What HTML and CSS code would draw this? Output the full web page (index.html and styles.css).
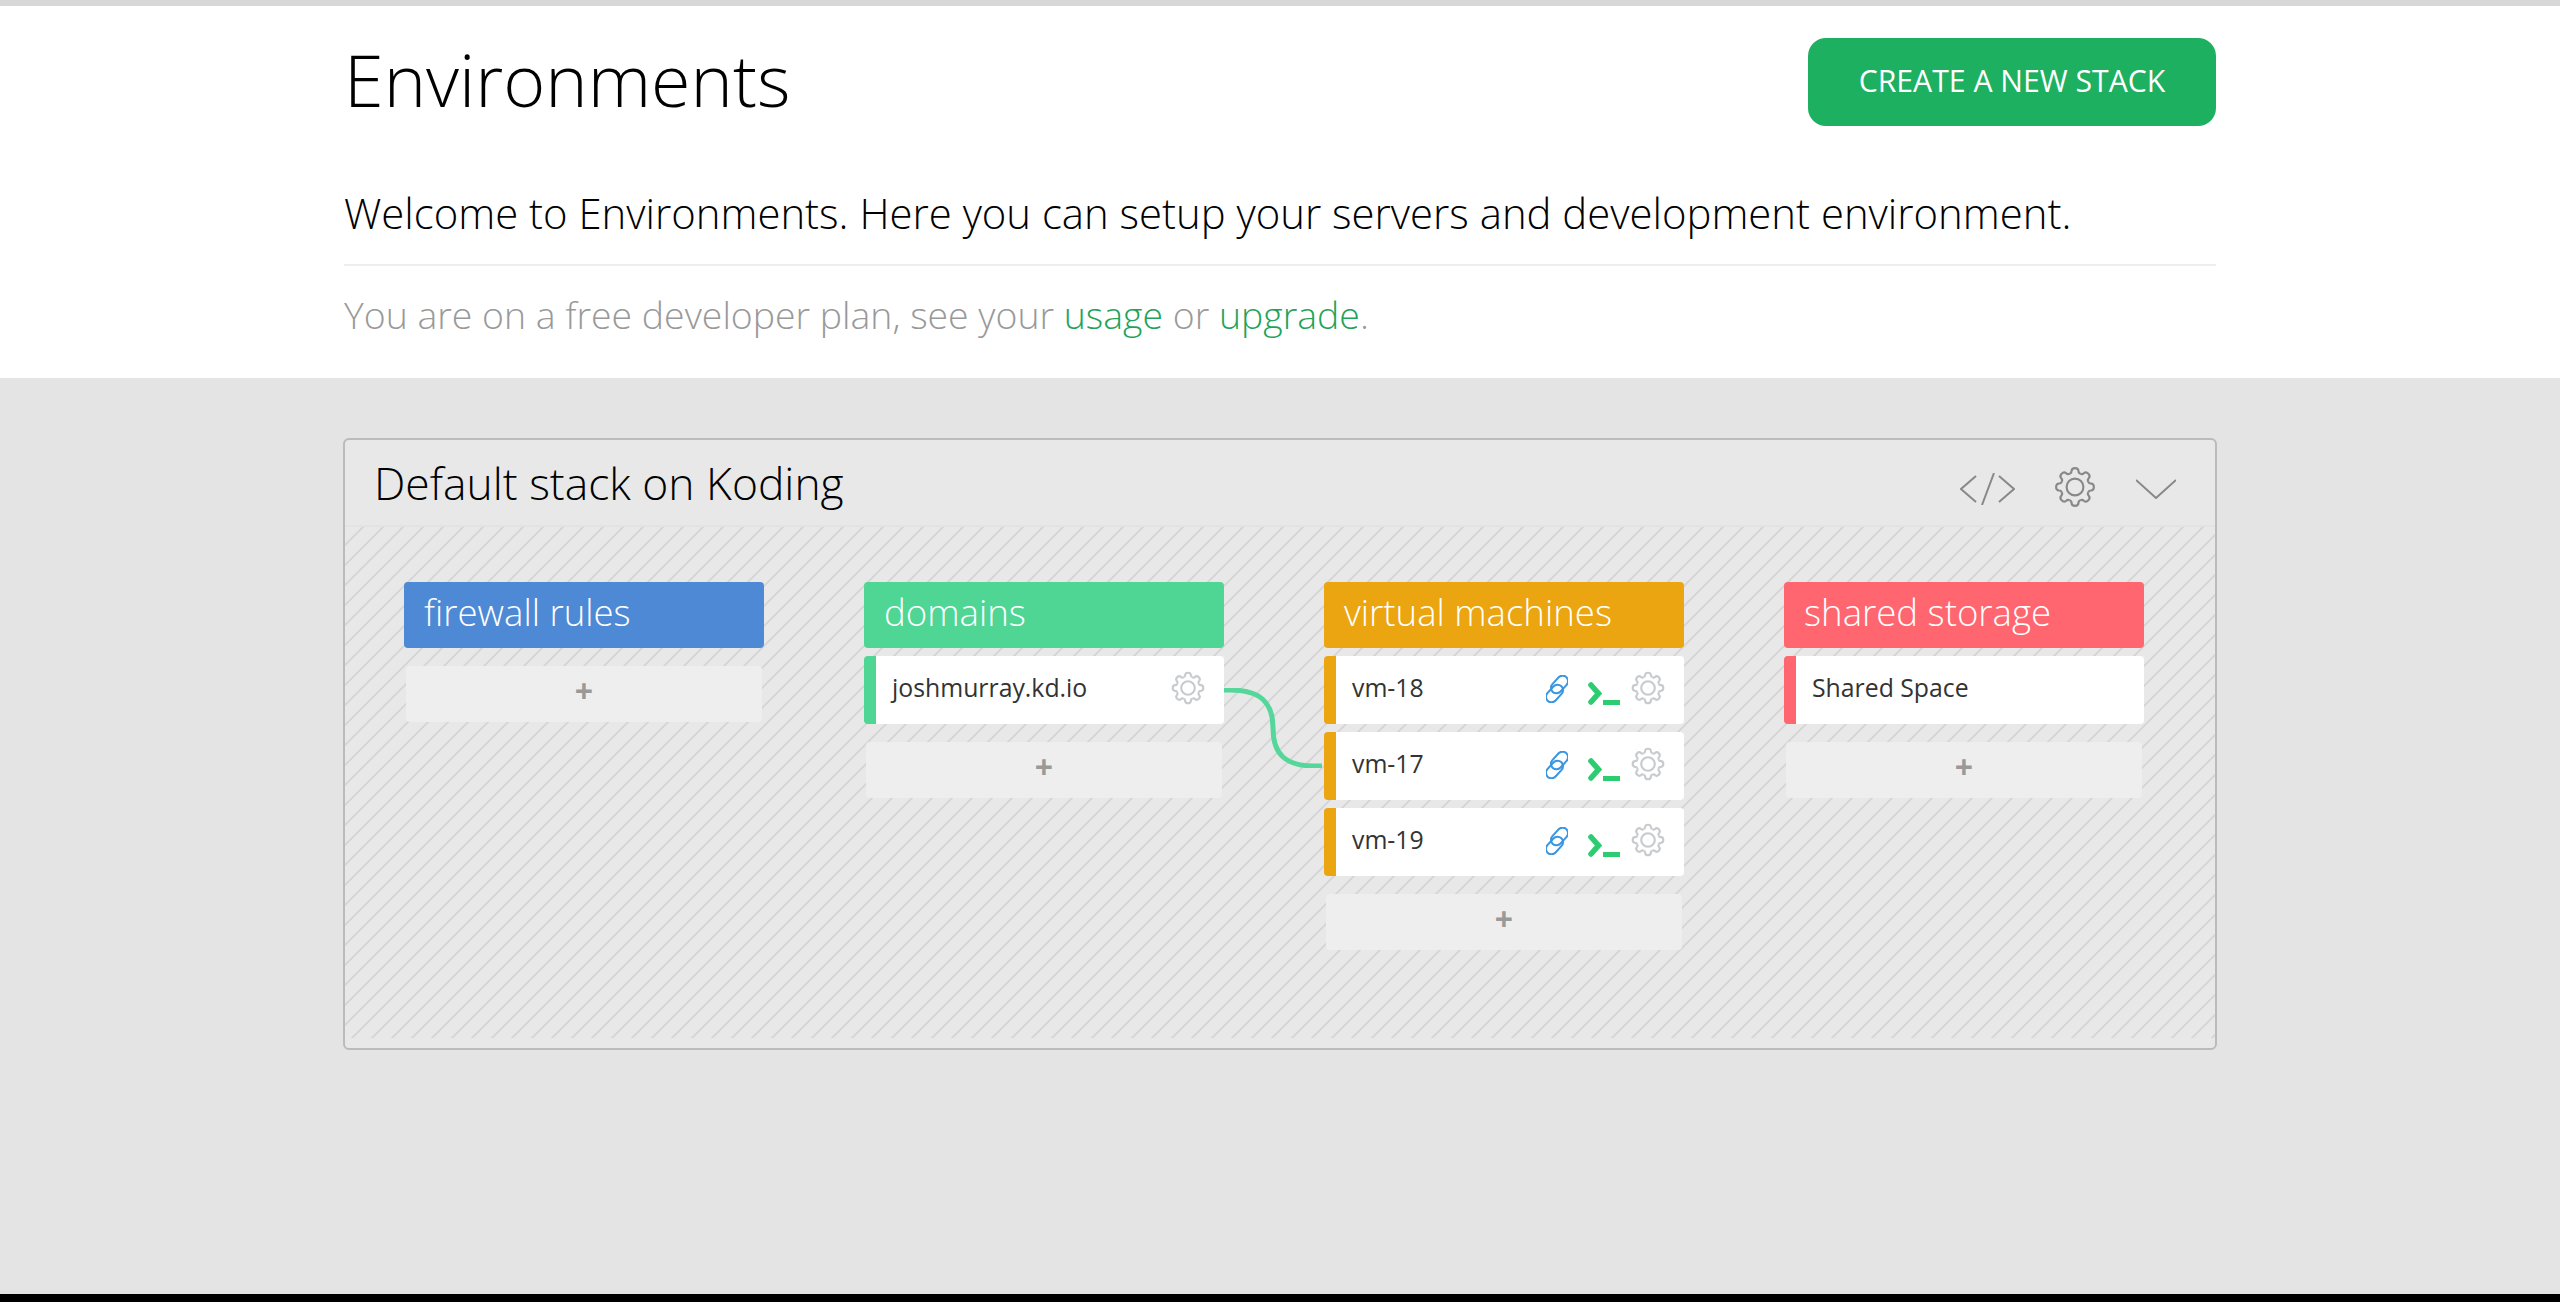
FILE: index.html
```html
<!DOCTYPE html>
<html lang="en">
<head>
    <meta charset="UTF-8">
    <title>Environments</title>
    <link rel="stylesheet" href="styles.css">
</head>
<body>
    <svg class="defs" width="0" height="0">
        <defs>
            <path id="tooth" d="M8.8 4.4 Q10 4.2 10 2.9 Q10.1 1.2 12 1.2 Q13.9 1.2 14 2.9 Q14 4.2 15.2 4.4"/>
            <symbol id="gear" viewBox="0 0 24 24">
                <use href="#tooth"/>
                <use href="#tooth" transform="rotate(45 12 12)"/>
                <use href="#tooth" transform="rotate(90 12 12)"/>
                <use href="#tooth" transform="rotate(135 12 12)"/>
                <use href="#tooth" transform="rotate(180 12 12)"/>
                <use href="#tooth" transform="rotate(225 12 12)"/>
                <use href="#tooth" transform="rotate(270 12 12)"/>
                <use href="#tooth" transform="rotate(315 12 12)"/>
                <circle cx="12" cy="12" r="4.8"/>
            </symbol>
            <symbol id="link" viewBox="0 0 22 28" overflow="visible">
                <rect x="8" y="-0.5" width="11" height="20" rx="5.5" transform="rotate(42 13.5 9.5)"/>
                <rect x="3" y="8.5" width="11" height="20" rx="5.5" transform="rotate(42 8.5 18.5)"/>
            </symbol>
            <symbol id="terminal" viewBox="0 0 32 23">
                <path class="prompt" d="M3 3 L10.5 11.5 L3 20"/>
                <rect class="cursor" x="15" y="18" width="17" height="5"/>
            </symbol>
        </defs>
    </svg>

    <header class="intro">
        <div class="wrap">
            <div class="title-row">
                <h1>Environments</h1>
                <button class="btn-create">CREATE A NEW STACK</button>
            </div>
            <p class="welcome">Welcome to Environments. Here you can setup your servers and development environment.</p>
            <p class="plan">You are on a free developer plan, see your <a href="#">usage</a> or <a href="#">upgrade</a>.</p>
        </div>
    </header>

    <main class="content">
        <section class="stack">
            <div class="stack-head">
                <h2>Default stack on Koding</h2>
                <div class="stack-tools">
                    <svg class="tool-code" viewBox="0 0 55 32"><path d="M16 3 L1 16 L16 29 M34 0 L22 32 M39 3 L54 16 L39 29"/></svg>
                    <svg class="tool-gear"><use href="#gear"/></svg>
                    <svg class="tool-chevron" viewBox="0 0 40 20"><path d="M0 1 L20 19 L40 1"/></svg>
                </div>
            </div>
            <div class="stack-body">
                <svg class="wire" viewBox="0 0 98 80"><path d="M0 2 H6 C36 2 49 14 49 40 C49 66 61 78 91 78 H98"/></svg>

                <div class="col col-blue">
                    <div class="col-title">firewall rules</div>
                    <div class="add">+</div>
                </div>

                <div class="col col-green">
                    <div class="col-title">domains</div>
                    <div class="item">
                        <span class="name">joshmurray.kd.io</span>
                        <svg class="ic-gear"><use href="#gear"/></svg>
                    </div>
                    <div class="add">+</div>
                </div>

                <div class="col col-orange">
                    <div class="col-title">virtual machines</div>
                    <div class="item">
                        <span class="name">vm-18</span>
                        <svg class="ic-link"><use href="#link"/></svg>
                        <svg class="ic-term"><use href="#terminal"/></svg>
                        <svg class="ic-gear"><use href="#gear"/></svg>
                    </div>
                    <div class="item">
                        <span class="name">vm-17</span>
                        <svg class="ic-link"><use href="#link"/></svg>
                        <svg class="ic-term"><use href="#terminal"/></svg>
                        <svg class="ic-gear"><use href="#gear"/></svg>
                    </div>
                    <div class="item">
                        <span class="name">vm-19</span>
                        <svg class="ic-link"><use href="#link"/></svg>
                        <svg class="ic-term"><use href="#terminal"/></svg>
                        <svg class="ic-gear"><use href="#gear"/></svg>
                    </div>
                    <div class="add">+</div>
                </div>

                <div class="col col-red">
                    <div class="col-title">shared storage</div>
                    <div class="item">
                        <span class="name">Shared Space</span>
                    </div>
                    <div class="add">+</div>
                </div>
            </div>
        </section>
    </main>
</body>
</html>
```

FILE: styles.css
```css
* {
    box-sizing: border-box;
}
html, body {
    height: 100%;
}
body {
    margin: 0;
    display: flex;
    flex-direction: column;
    font-family: "Open Sans", "Liberation Sans", sans-serif;
    background-color: #000;
    padding-bottom: 8px;
    overflow: hidden;
}
.defs {
    position: absolute;
}
.intro {
    background-color: #fff;
    border-top: 6px solid #d8d8d8;
    height: 378px;
}
.wrap {
    width: 1872px;
    margin: 0 auto;
}
.title-row {
    display: flex;
    justify-content: space-between;
    align-items: center;
    padding-top: 32px;
}
h1 {
    margin: 0 0 6px;
    font-size: 71.8px;
    line-height: 78px;
    font-weight: 300;
    color: #000;
}
.btn-create {
    width: 408px;
    height: 88px;
    padding: 0 0 3px;
    border: none;
    border-radius: 18px;
    background-color: #1cb060;
    color: #fff;
    font-family: inherit;
    font-size: 30.2px;
    font-weight: 500;
}
.welcome {
    margin: 57px 0 0;
    padding-bottom: 21px;
    border-bottom: 2px solid #eee;
    font-size: 41.85px;
    line-height: 60px;
    font-weight: 300;
    color: #000;
}
.plan {
    margin: 21px 0 0;
    font-size: 37.4px;
    line-height: 56px;
    font-weight: 300;
    color: #999;
}
.plan a {
    color: #1fa35a;
    text-decoration: none;
}
.content {
    flex: 1;
    background-color: #e4e4e4;
    padding-top: 60px;
}
.stack {
    width: 1874px;
    height: 612px;
    margin: 0 auto;
    display: flex;
    flex-direction: column;
    border: 2px solid #bbb;
    border-radius: 6px;
    background-color: #e8e8e8;
    padding-bottom: 10px;
}
.stack-head {
    height: 87px;
    display: flex;
    justify-content: space-between;
    align-items: center;
    padding: 0 39px 0 29px;
    border-bottom: 2px solid #e3e3e3;
}
h2 {
    margin: 0;
    font-size: 44.4px;
    font-weight: 300;
    color: #000;
}
.stack-tools {
    display: flex;
    align-items: center;
    padding-top: 9px;
}
.stack-tools svg {
    fill: none;
    stroke: #888;
    stroke-width: 2;
}
.tool-code {
    width: 55px;
    height: 32px;
    margin-top: 3px;
}
.tool-gear {
    width: 42px;
    height: 42px;
    margin-left: 39px;
    stroke-width: 1.2 !important;
}
.tool-chevron {
    width: 40px;
    height: 20px;
    margin: 3px 0 0 40px;
}
.stack-body {
    position: relative;
    flex: 1;
    display: flex;
    gap: 100px;
    padding: 55px 0 0 59px;
    background-image: repeating-linear-gradient(135deg, #e8e8e8 0, #e8e8e8 11.6px, #d7d7d7 12.1px, #d7d7d7 13.6px, #e8e8e8 14.14px);
}
.wire {
    position: absolute;
    left: 879px;
    top: 161px;
    width: 98px;
    height: 80px;
    fill: none;
    stroke: #55d69a;
    stroke-width: 5;
}
.col {
    width: 360px;
}
.col-title {
    height: 66px;
    line-height: 60px;
    padding-left: 20px;
    border-radius: 4px;
    font-size: 36.6px;
    font-weight: 300;
    color: #fff;
}
.col-blue .col-title {
    background-color: #4d89d4;
}
.col-green .col-title {
    background-color: #4fd695;
}
.col-orange .col-title {
    background-color: #eba511;
}
.col-red .col-title {
    background-color: #ff6670;
}
.item {
    height: 68px;
    margin-top: 8px;
    display: flex;
    align-items: center;
    padding: 0 19px 0 16px;
    background-color: #fff;
    border-left: 12px solid;
    border-radius: 4px;
}
.col-green .item {
    border-left-color: #4fd695;
}
.col-orange .item {
    border-left-color: #eba511;
}
.col-red .item {
    border-left-color: #ff6670;
}
.name {
    flex: 1;
    margin-top: -6px;
    font-size: 24.8px;
    color: #333;
}
.ic-link {
    width: 22px;
    height: 28px;
    margin-top: -2px;
    fill: none;
    stroke: #3a96e0;
    stroke-width: 2;
}
.ic-term {
    width: 32px;
    height: 23px;
    margin: 6px 0 0 20px;
}
.prompt {
    fill: none;
    stroke: #2ecc71;
    stroke-width: 5.6;
    stroke-linecap: round;
}
.cursor {
    fill: #2ecc71;
}
.ic-gear {
    width: 34px;
    height: 34px;
    margin: -4px 0 0 11px;
    fill: none;
    stroke: #c8cbce;
    stroke-width: 1.5;
}
.add {
    height: 56px;
    margin: 18px 2px 0;
    border-radius: 4px;
    background-color: #eee;
    text-align: center;
    font-size: 32px;
    font-weight: 700;
    line-height: 50px;
    color: #999;
}
```
